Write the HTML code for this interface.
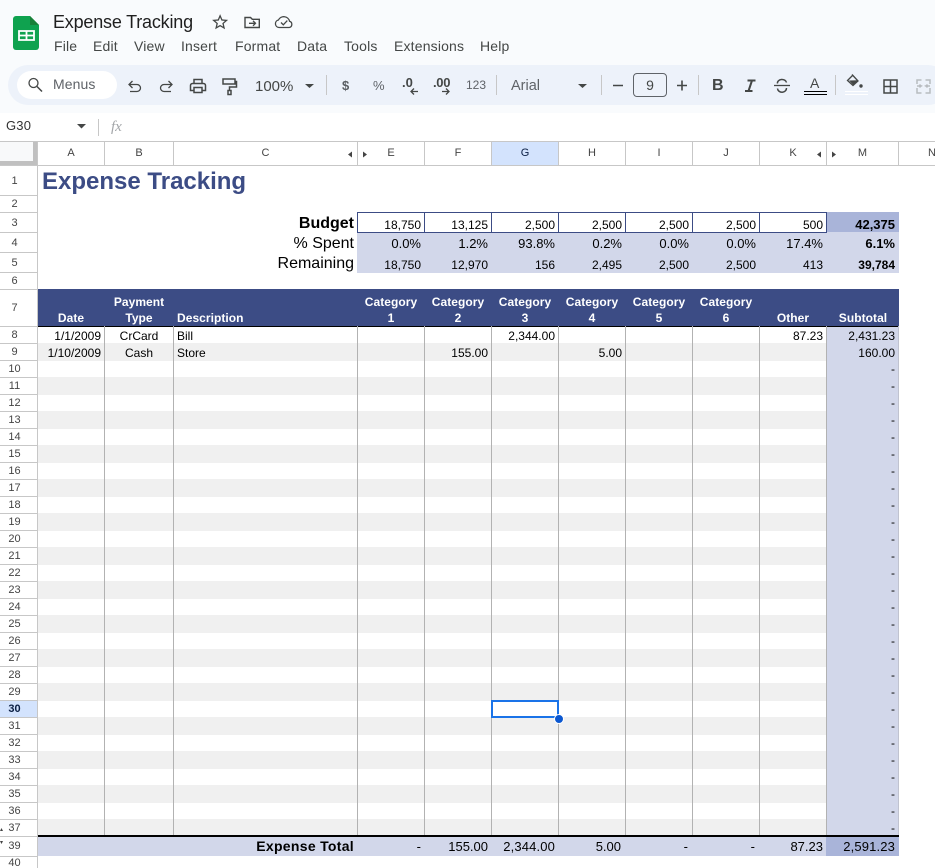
<!DOCTYPE html>
<html><head><meta charset="utf-8"><title>Expense Tracking</title>
<style>
html,body{margin:0;padding:0;background:#fff}
#p{position:relative;width:935px;height:868px;overflow:hidden;background:#fff;font-family:"Liberation Sans",Arial,sans-serif;font-size:12px;color:#000}
#p div{position:absolute;white-space:nowrap}
svg{position:absolute;left:0;top:0}
.m{top:38px;font-size:14px;line-height:16px;color:#444746;letter-spacing:.17px}
.ch{top:145px;height:16px;line-height:16px;font-size:11px;color:#444;text-align:center}
.rh{left:0;width:29px;text-align:center;font-size:11px;line-height:16px;color:#444}
.E{right:514px}.F{right:447px}.G{right:380px}.H{right:313px}.I{right:246px}.J{right:179px}.K{right:112px}.M{right:40px}
.h{color:#fff;font-weight:bold;text-align:center;line-height:16px;font-size:12px;letter-spacing:.05px}
.b{font-weight:bold}
.l{font-size:16px;line-height:18px;right:581px}
.vl{width:1px;background:#b2b2b2;top:326px;height:509px}
.nv{width:1px;background:#3c4c85;top:212px;height:21px}
.hl{left:0;width:37px;height:1px;background:#c7c7c7}
.cl{top:141px;width:1px;height:24px;background:#c7c7c7}
.p{font-size:13px;line-height:16px;top:236px}
.t{top:838px;font-size:13px;line-height:18px}
</style></head><body><div id="p">

<div style="left:0;top:0;width:935px;height:113px;background:#f9fbfd"></div>
<div style="left:8px;top:65px;width:940px;height:40px;border-radius:20px;background:#edf2fa"></div>
<div style="left:17px;top:71px;width:100px;height:28px;border-radius:14px;background:#fff"></div>

<div style="left:53px;top:11px;font-size:18px;line-height:22px;color:#1f1f1f;letter-spacing:-.2px">Expense Tracking</div>
<div class="m" style="left:54px">File</div>
<div class="m" style="left:93px">Edit</div>
<div class="m" style="left:134px">View</div>
<div class="m" style="left:181px">Insert</div>
<div class="m" style="left:235px">Format</div>
<div class="m" style="left:297px">Data</div>
<div class="m" style="left:344px">Tools</div>
<div class="m" style="left:394px">Extensions</div>
<div class="m" style="left:480px">Help</div>

<div style="left:53px;top:76px;font-size:14px;line-height:16px;color:#5f6368;letter-spacing:.1px">Menus</div>
<div style="left:255px;top:79px;font-size:15px;line-height:16px;color:#444746">100%</div>
<div style="left:342px;top:78px;font-size:13px;line-height:16px;color:#5a5e62;font-weight:bold">$</div>
<div style="left:373px;top:78px;font-size:13px;line-height:16px;color:#5f6368">%</div>
<div style="left:402px;top:75px;font-size:13px;line-height:16px;color:#444746;font-weight:bold">.0</div>
<div style="left:433px;top:75px;font-size:13px;line-height:16px;color:#444746;font-weight:bold;letter-spacing:-.3px">.00</div>
<div style="left:466px;top:77px;font-size:12px;line-height:16px;color:#5f6368">123</div>
<div style="left:511px;top:78px;font-size:14.5px;line-height:16px;color:#5f6368">Arial</div>
<div style="left:633px;top:73px;width:32px;height:22px;border:1px solid #5f6368;border-radius:4px;text-align:center;font-size:14px;line-height:23px;color:#444746">9</div>
<div style="left:712px;top:78px;font-size:16px;line-height:16px;color:#444746;font-weight:bold">B</div>
<div style="left:810px;top:76px;font-size:14px;line-height:14px;color:#444746">A</div>

<svg width="935" height="113" viewBox="0 0 935 113" fill="none">
<path d="M16 16h14l9 9v22a3 3 0 0 1-3 3H16a3 3 0 0 1-3-3V19a3 3 0 0 1 3-3z" fill="#0fa24f"/>
<path d="M30 16l9 9h-9z" fill="#188038"/>
<path d="M19 31h15v9H19zM19 35.500h15M26.500 31v9" stroke="#fff" stroke-width="1.800"/>
<path transform="translate(210.500 12.500) scale(.8)" d="M22 9.240l-7.190-.62L12 2 9.190 8.630 2 9.240l5.460 4.730L5.820 21 12 17.270 18.180 21l-1.630-7.030L22 9.240zM12 15.400l-3.760 2.270 1-4.280-3.320-2.880 4.380-.38L12 6.100l1.710 4.040 4.380.38-3.320 2.880 1 4.280L12 15.400z" fill="#444746"/>
<path d="M245 17.500h5.500l1.800 1.800h7v8.200h-14.300z" stroke="#444746" stroke-width="1.400"/>
<path d="M249 23.300h6M253 20.800l2.500 2.500-2.500 2.500" stroke="#444746" stroke-width="1.300"/>
<path d="M279 27.500a3.800 3.800 0 0 1-.6-7.500 6 6 0 0 1 11.200 1.300 3.200 3.200 0 0 1-.4 6.200z" stroke="#444746" stroke-width="1.300"/>
<path d="M281 22.500l2.300 2.300 4-4.200" stroke="#444746" stroke-width="1.300"/>
<circle cx="33.500" cy="83" r="4.500" stroke="#444746" stroke-width="1.300"/><path d="M37 86.500l5 5" stroke="#444746" stroke-width="1.500"/>
<g stroke="#444746" stroke-width="1.300">
<path d="M132.500 81l-3.500 3.500 3.500 3.500M129.500 84.500h7.500a3.500 3.500 0 0 1 0 7h-7"/>
<path d="M168.500 81l3.500 3.500-3.500 3.500M171.500 84.500h-7.500a3.500 3.500 0 0 0 0 7h7"/>
<g stroke-width="1.500">
<path d="M194 83v-3.500h8V83M193.500 90.500h-3V85.500a2 2 0 0 1 2-2h11a2 2 0 0 1 2 2v5h-3M194 87.500h8v5h-8z"/>
<path d="M223 79h12v5h-12zM235 81.500h1.500v5.500h-7v3"/><path d="M228 90.500h3v4h-3z"/>
<path d="M884 80h13v13h-13zM890.500 80v13M884 86.500h13"/>
</g>
<path d="M852 74.500l6 6.500-5 4.500-5.500-5 5-5" stroke-width="1.300"/>
</g>
<path d="M849 80.500l9-.2-4.700 4.700z" fill="#444746"/><circle cx="861" cy="86" r="1.700" fill="#444746"/>
<path d="M305 84h9l-4.500 4zM578 84h9l-4.500 4z" fill="#444746"/>
<path d="M326.500 75v20M496.500 75v20M601.500 75v20M698.500 75v20M835.500 75v20" stroke="#c7c7c7"/>
<path d="M411 91.500h7M414 88.500l-3 3 3 3M442 91.500h7M446 88.500l3 3-3 3" stroke="#444746" stroke-width="1.300"/>
<path d="M613 85.500h10M677 85.500h10M682 80.500v10" stroke="#444746" stroke-width="1.600"/>
<path d="M774 85.500h16" stroke="#444746" stroke-width="1.300"/>
<path d="M777.500 83.500a4.500 3.500 0 0 1 9 -1M786.500 88a4.500 4 0 0 1-9 .5" stroke="#444746" stroke-width="1.500"/>
<path d="M747.500 80.500h8M745 91h7.500M752 80.500l-3.500 10.500" stroke="#444746" stroke-width="2"/>
<path d="M804 91.500h23M804 94.500h23" stroke="#000"/>
<path d="M845 91.500h23M845 94.500h23" stroke="#fff"/>
<path d="M917 84v-4h4.500M917 88v5h4.500M930 84v-4h-4.500M930 88v5h-4.500M917 86h4l-1.500-1.500M917 86h4l-1.500 1.500M930 86h-4l1.500-1.500M930 86h-4l1.500 1.500" stroke="#b8bcc0" stroke-width="1.500"/>
</svg>

<!-- formula bar -->
<div style="left:0;top:113px;width:935px;height:28px;background:#fff"></div>
<svg width="935" height="141" viewBox="0 0 935 141" fill="none" style="top:0"><path d="M77 124h9l-4.500 4.500z" fill="#444746"/></svg>
<div style="left:6px;top:118px;font-size:13px;line-height:16px;color:#333;letter-spacing:.2px">G30</div>
<div style="left:111px;top:118px;font-size:15px;line-height:18px;color:#a3a6a9;font-style:italic;font-family:'Liberation Serif',serif">fx</div>
<div style="left:98px;top:119px;width:1px;height:17px;background:#c7c7c7"></div>

<!-- column header -->
<div style="left:0;top:141px;width:935px;height:1px;background:#c7c7c7"></div>
<div style="left:0;top:165px;width:935px;height:1px;background:#c7c7c7"></div>
<div style="left:0;top:142px;width:33px;height:19px;background:#f8f9fa"></div>
<div style="left:33px;top:142px;width:4px;height:23px;background:#c0c0c0"></div>
<div style="left:0;top:161px;width:37px;height:4px;background:#c0c0c0"></div>
<div style="left:491px;top:142px;width:67px;height:23px;background:#d3e3fd"></div>
<div class="cl" style="left:37px"></div><div class="cl" style="left:104px"></div><div class="cl" style="left:173px"></div><div class="cl" style="left:357px"></div><div class="cl" style="left:424px"></div><div class="cl" style="left:491px"></div><div class="cl" style="left:558px"></div><div class="cl" style="left:625px"></div><div class="cl" style="left:692px"></div><div class="cl" style="left:759px"></div><div class="cl" style="left:826px"></div><div class="cl" style="left:898px"></div>
<div class="ch" style="left:38px;width:66px">A</div>
<div class="ch" style="left:105px;width:68px">B</div>
<div class="ch" style="left:174px;width:183px">C</div>
<div class="ch" style="left:358px;width:66px">E</div>
<div class="ch" style="left:425px;width:66px">F</div>
<div class="ch" style="left:492px;width:66px;color:#0b1f44">G</div>
<div class="ch" style="left:559px;width:66px">H</div>
<div class="ch" style="left:626px;width:66px">I</div>
<div class="ch" style="left:693px;width:66px">J</div>
<div class="ch" style="left:760px;width:66px">K</div>
<div class="ch" style="left:827px;width:71px">M</div>
<div class="ch" style="left:899px;width:66px">N</div>
<svg width="935" height="165" viewBox="0 0 935 165">
<path d="M352 151.500v6l-4-3zM363 151.500v6l4-3zM821 151.500v6l-4-3zM832 151.500v6l4-3z" fill="#444"/>
</svg>

<!-- row header -->
<div style="left:37px;top:165px;width:1px;height:703px;background:#c7c7c7"></div>
<div style="left:0;top:701px;width:37px;height:16px;background:#d3e3fd"></div>
<div class="hl" style="top:195px"></div><div class="hl" style="top:212px"></div><div class="hl" style="top:232px"></div><div class="hl" style="top:252px"></div><div class="hl" style="top:272px"></div><div class="hl" style="top:289px"></div>
<div class="hl" style="top:326px"></div>
<div style="left:0;top:343px;width:37px;height:493px;background:repeating-linear-gradient(#c7c7c7 0,#c7c7c7 1px,transparent 1px,transparent 17px)"></div>
<div class="hl" style="top:836px"></div><div class="hl" style="top:856px"></div>
<div class="rh" style="top:173px">1</div>
<div class="rh" style="top:196px">2</div>
<div class="rh" style="top:215px">3</div>
<div class="rh" style="top:235px">4</div>
<div class="rh" style="top:255px">5</div>
<div class="rh" style="top:273px">6</div>
<div class="rh" style="top:300px">7</div>
<div class="rh" style="top:327px">8</div>
<div class="rh" style="top:344px">9</div>
<div class="rh" style="top:361px;line-height:17px">10<br>11<br>12<br>13<br>14<br>15<br>16<br>17<br>18<br>19<br>20<br>21<br>22<br>23<br>24<br>25<br>26<br>27<br>28<br>29<br><b style="color:#0b1f44">30</b><br>31<br>32<br>33<br>34<br>35<br>36<br>37</div>
<div class="rh" style="top:838px">39</div>
<div class="rh" style="top:855px">40</div>
<svg width="10" height="868" viewBox="0 0 10 868"><path d="M0 831l3 0-1.500-3zM0 841h3l-1.500 3z" fill="#444"/></svg>

<!-- title -->
<div style="left:42px;top:168px;font-size:24px;line-height:28px;font-weight:bold;color:#3c4c85">Expense Tracking</div>

<!-- summary -->
<div style="left:357px;top:232px;width:542px;height:41px;background:#d2d7ea"></div>
<div style="left:827px;top:212px;width:72px;height:20px;background:#a9b4d9"></div>
<div style="left:357px;top:212px;width:470px;height:1px;background:#3c4c85"></div>
<div style="left:357px;top:232px;width:470px;height:1px;background:#3c4c85"></div>
<div class="nv" style="left:357px"></div><div class="nv" style="left:424px"></div><div class="nv" style="left:491px"></div><div class="nv" style="left:558px"></div><div class="nv" style="left:625px"></div><div class="nv" style="left:692px"></div><div class="nv" style="left:759px"></div><div class="nv" style="left:826px"></div>
<div class="l b" style="top:215px">Budget</div>
<div class="l" style="top:235px">% Spent</div>
<div class="l" style="top:255px">Remaining</div>

<div class="E" style="top:218px">18,750</div><div class="F" style="top:218px">13,125</div><div class="G" style="top:218px">2,500</div><div class="H" style="top:218px">2,500</div><div class="I" style="top:218px">2,500</div><div class="J" style="top:218px">2,500</div><div class="K" style="top:218px">500</div><div class="M b" style="top:217px;font-size:13px">42,375</div>
<div class="E p">0.0%</div><div class="F p">1.2%</div><div class="G p">93.8%</div><div class="H p">0.2%</div><div class="I p">0.0%</div><div class="J p">0.0%</div><div class="K p">17.4%</div><div class="M p b">6.1%</div>
<div class="E" style="top:258px">18,750</div><div class="F" style="top:258px">12,970</div><div class="G" style="top:258px">156</div><div class="H" style="top:258px">2,495</div><div class="I" style="top:258px">2,500</div><div class="J" style="top:258px">2,500</div><div class="K" style="top:258px">413</div><div class="M b" style="top:258px">39,784</div>

<!-- table header -->
<div style="left:38px;top:289px;width:861px;height:37px;background:#3c4c85"></div>
<div style="left:38px;top:326px;width:861px;height:1px;background:#000"></div>
<div class="h" style="left:38px;width:66px;top:310px">Date</div>
<div class="h" style="left:105px;width:68px;top:294px">Payment<br>Type</div>
<div class="h" style="left:177px;top:310px">Description</div>
<div class="h" style="left:358px;width:66px;top:294px">Category<br>1</div>
<div class="h" style="left:425px;width:66px;top:294px">Category<br>2</div>
<div class="h" style="left:492px;width:66px;top:294px">Category<br>3</div>
<div class="h" style="left:559px;width:66px;top:294px">Category<br>4</div>
<div class="h" style="left:626px;width:66px;top:294px">Category<br>5</div>
<div class="h" style="left:693px;width:66px;top:294px">Category<br>6</div>
<div class="h" style="left:760px;width:66px;top:310px">Other</div>
<div class="h" style="left:827px;width:72px;top:310px">Subtotal</div>

<!-- body -->
<div style="left:38px;top:343px;width:789px;height:492px;background:repeating-linear-gradient(#f0f0f0 0,#f0f0f0 18px,#fff 18px,#fff 34px)"></div>
<div style="left:827px;top:327px;width:72px;height:508px;background:#d2d7ea"></div>
<div class="vl" style="left:104px"></div><div class="vl" style="left:173px"></div><div class="vl" style="left:357px"></div><div class="vl" style="left:424px"></div><div class="vl" style="left:491px"></div><div class="vl" style="left:558px"></div><div class="vl" style="left:625px"></div><div class="vl" style="left:692px"></div><div class="vl" style="left:759px"></div><div class="vl" style="left:826px"></div><div class="vl" style="left:898px;background:#c0c3d0"></div>

<div style="right:834px;top:329px">1/1/2009</div>
<div style="left:105px;width:68px;text-align:center;top:329px">CrCard</div>
<div style="left:177px;top:329px">Bill</div>
<div class="G" style="top:329px">2,344.00</div>
<div class="K" style="top:329px">87.23</div>
<div class="M" style="top:329px">2,431.23</div>
<div style="right:834px;top:346px">1/10/2009</div>
<div style="left:105px;width:68px;text-align:center;top:346px">Cash</div>
<div style="left:177px;top:346px">Store</div>
<div class="F" style="top:346px">155.00</div>
<div class="H" style="top:346px">5.00</div>
<div class="M" style="top:346px">160.00</div>
<div class="M" style="top:361px;line-height:17px;text-align:right">-<br>-<br>-<br>-<br>-<br>-<br>-<br>-<br>-<br>-<br>-<br>-<br>-<br>-<br>-<br>-<br>-<br>-<br>-<br>-<br>-<br>-<br>-<br>-<br>-<br>-<br>-<br>-</div>

<!-- selection -->
<div style="left:491px;top:700px;width:64px;height:14px;border:2px solid #1a73e8"></div>
<div style="left:554px;top:714px;width:8px;height:8px;border-radius:50%;background:#0b57d0;border:1px solid #fff"></div>

<!-- total -->
<div style="left:38px;top:835px;width:861px;height:2px;background:#000"></div>
<div style="left:38px;top:837px;width:861px;height:19px;background:#d2d7ea"></div>
<div style="left:826px;top:837px;width:73px;height:19px;background:#a9b4d9"></div>
<div class="b" style="right:581px;top:837px;font-size:14px;line-height:18px;letter-spacing:.3px">Expense Total</div>
<div class="E t">-</div>
<div class="F t">155.00</div>
<div class="G t" style="letter-spacing:.15px">2,344.00</div>
<div class="H t" style="margin-right:1px">5.00</div>
<div class="I t" style="margin-right:1px">-</div>
<div class="J t" style="margin-right:1px">-</div>
<div class="K t">87.23</div>
<div class="M t" style="letter-spacing:.15px">2,591.23</div>

</div></body></html>
